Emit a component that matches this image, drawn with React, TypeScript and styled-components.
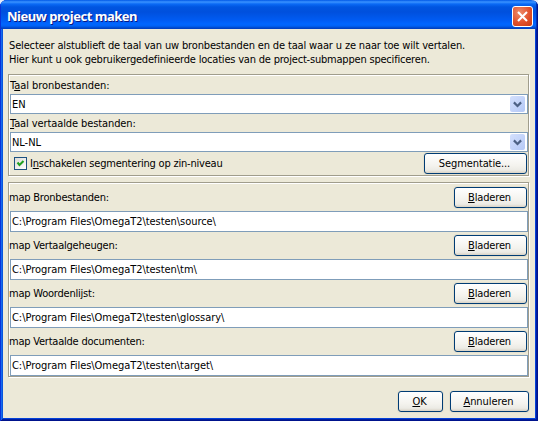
import React from 'react';
import styled, { createGlobalStyle } from 'styled-components';

const GlobalStyle = createGlobalStyle`
  * { box-sizing: border-box; }
  body { margin: 0; background: #e4ecfa; overflow: hidden; }
  button, input { font: inherit; }
`;

const Window = styled.div`
  width: 538px;
  height: 421px;
  display: flex;
  flex-direction: column;
  background: #ece9d8;
  padding: 0 3px 3px;
  border-radius: 7px 7px 0 0;
  box-shadow: inset 1px 0 #0831d9, inset -1px -1px #00138c, inset 2px 0 #166aee, inset -2px -2px #001ea0, inset 3px 0 #0855dd, inset -3px -3px #0441d8;
  font: 11px/14px 'DejaVu Sans Condensed', 'DejaVu Sans', sans-serif;
  font-stretch: condensed;
  color: #000;
  overflow: hidden;
`;

const TitleBar = styled.header`
  height: 29px;
  flex: none;
  margin: 0 -3px;
  padding: 3px 5px 0 7px;
  display: flex;
  align-items: center;
  justify-content: space-between;
  background: linear-gradient(#0058e6 0, #3a93ff 2px, #0a6af5 4px, #0055e0 7px, #0050dd 12px, #005bf2 20px, #0066ff 24px, #0062f5 26px, #0046c8 28px, #003dbb 29px);
  box-shadow: inset 1px 0 #0831d9, inset -1px 0 #00138c, inset -2px 0 #0234b8;
`;

const Title = styled.h1`
  margin: 0;
  font: bold 13px/16px 'Noto Sans', sans-serif;
  font-stretch: normal;
  letter-spacing: -0.48px;
  color: #fff;
  text-shadow: 1px 1px #0a1883;
`;

const CloseButton = styled.button`
  width: 21px;
  height: 21px;
  padding: 0;
  display: grid;
  place-items: center;
  border: 1px solid #fff;
  border-radius: 3px;
  background: radial-gradient(circle at 35% 30%, #ed8c6b, #e2512b 55%, #c73a12);
`;

const Content = styled.main`
  flex: 1;
  display: flex;
  flex-direction: column;
  padding: 10px 5px 0;
`;

const Intro = styled.div`
  height: 35px;
  padding-left: 1px;
`;

const Text = styled.span<{ $spacing?: number }>`
  display: block;
  white-space: nowrap;
  letter-spacing: ${(p) => p.$spacing ?? -0.05}px;
`;

const Key = styled.span`
  text-decoration: underline;
  text-decoration-thickness: 1px;
  text-underline-offset: 1px;
  text-decoration-skip-ink: none;
`;

const Group = styled.section<{ $height: number }>`
  height: ${(p) => p.$height}px;
  flex: none;
  margin-bottom: 6px;
  padding-left: 1px;
  border: 1px solid #a09d8c;
  box-shadow: 1px 1px #fff, inset 1px 1px #fff;
  width: 521px;
`;

const ComboLabel = styled.label<{ $height: number }>`
  display: flex;
  align-items: center;
  height: ${(p) => p.$height}px;
  padding-top: 2px;
`;

const Combo = styled.div`
  height: 20px;
  display: flex;
  align-items: flex-end;
  justify-content: space-between;
  padding: 0 2px 1px 1px;
  background: #fff;
  border: 1px solid #7f9db9;
`;

const ComboArrow = styled.span`
  width: 15px;
  height: 16px;
  display: grid;
  place-items: center;
  border-radius: 2px;
  background: linear-gradient(135deg, #d4e0fd, #b4c8f6);
`;

const OptionRow = styled.div`
  height: 22px;
  display: flex;
  align-items: center;
  justify-content: space-between;
  padding: 1px 1px 0 4px;
`;

const CheckLabel = styled.label`
  display: flex;
  align-items: center;
  gap: 3px;
`;

const CheckBox = styled.span`
  width: 13px;
  height: 13px;
  display: grid;
  place-items: center;
  border: 1px solid #1c5180;
  background: linear-gradient(135deg, #dcdcd7, #fff);
`;

const Button = styled.button<{ $width: number }>`
  width: ${(p) => p.$width}px;
  height: 21px;
  flex: none;
  padding: 0 2px 0 0;
  display: flex;
  align-items: center;
  justify-content: center;
  border: 1px solid #003c74;
  border-radius: 3px;
  color: #000;
  background: linear-gradient(#fff, #f4f3ee 60%, #ecebe5 85%, #d8d2c5);
  box-shadow: 0 0 0 1px #e4e0cf;
`;

const FolderRow = styled.div`
  height: 24px;
  display: flex;
  justify-content: space-between;
  padding-right: 1px;
`;

const FolderLabel = styled.label`
  padding-top: 4px;
  margin-left: -1px;
`;

const Folder = styled.div`
  padding-top: 3px;
  &:first-child { padding-top: 4px; }
`;

const Field = styled.div`
  height: 21px;
  display: flex;
  align-items: center;
  padding-left: 1px;
  background: #fff;
  border: 1px solid #7f9db9;
`;

const Actions = styled.footer`
  display: flex;
  justify-content: flex-end;
  gap: 7px;
  padding: 8px 1px 0 0;
`;

const ArrowIcon = () => (
  <svg width="9" height="7" viewBox="0 0 9 7" fill="none">
    <path d="M.9 1.4 4.5 5 8.1 1.4" stroke="#4d6185" strokeWidth="2.2" />
  </svg>
);

const folders = [
  { label: 'map Bronbestanden:', path: 'C:\\Program Files\\OmegaT2\\testen\\source\\' },
  { label: 'map Vertaalgeheugen:', path: 'C:\\Program Files\\OmegaT2\\testen\\tm\\' },
  { label: 'map Woordenlijst:', path: 'C:\\Program Files\\OmegaT2\\testen\\glossary\\' },
  { label: 'map Vertaalde documenten:', path: 'C:\\Program Files\\OmegaT2\\testen\\target\\' },
];

export default function App() {
  return (
    <>
      <GlobalStyle />
      <Window>
        <TitleBar>
          <Title>Nieuw project maken</Title>
          <CloseButton aria-label="Sluiten">
            <svg width="13" height="13" viewBox="0 0 13 13">
              <path d="m2 2 9 9m0-9-9 9" stroke="#fff" strokeWidth="2.1" />
            </svg>
          </CloseButton>
        </TitleBar>
        <Content>
          <Intro>
            <Text $spacing={-0.15}>Selecteer alstublieft de taal van uw bronbestanden en de taal waar u ze naar toe wilt vertalen.</Text>
            <Text $spacing={-0.2}>Hier kunt u ook gebruikergedefinieerde locaties van de project-submappen specificeren.</Text>
          </Intro>
          <Group $height={102}>
            <ComboLabel $height={19}><Text>T<Key>a</Key>al bronbestanden:</Text></ComboLabel>
            <Combo><Text>EN</Text><ComboArrow><ArrowIcon /></ComboArrow></Combo>
            <ComboLabel $height={18}><Text $spacing={-0.1}><Key>T</Key>aal vertaalde bestanden:</Text></ComboLabel>
            <Combo><Text>NL-NL</Text><ComboArrow><ArrowIcon /></ComboArrow></Combo>
            <OptionRow>
              <CheckLabel>
                <CheckBox>
                  <svg width="9" height="9" viewBox="0 0 9 9" fill="none">
                    <path d="M1.5 3.5 3.5 6 7.5 2" stroke="#21a121" strokeWidth="2.1" />
                  </svg>
                </CheckBox>
                <Text $spacing={-0.21}>I<Key>n</Key>schakelen segmentering op zin-niveau</Text>
              </CheckLabel>
              <Button $width={103}><Text $spacing={-0.1}>Segmentatie...</Text></Button>
            </OptionRow>
          </Group>
          <Group $height={195}>
            {folders.map((f) => (
              <Folder key={f.label}>
                <FolderRow>
                  <FolderLabel><Text $spacing={-0.22}>{f.label}</Text></FolderLabel>
                  <Button $width={73}><Text $spacing={-0.15}><Key>B</Key>laderen</Text></Button>
                </FolderRow>
                <Field><Text>{f.path}</Text></Field>
              </Folder>
            ))}
          </Group>
          <Actions>
            <Button $width={45}><Text><Key>O</Key>K</Text></Button>
            <Button $width={79}><Text><Key>A</Key>nnuleren</Text></Button>
          </Actions>
        </Content>
      </Window>
    </>
  );
}
